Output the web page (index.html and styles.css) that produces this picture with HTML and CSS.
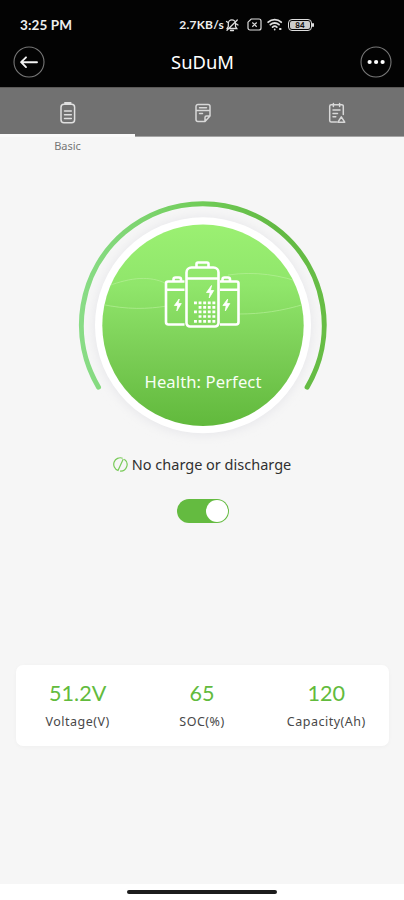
FILE: index.html
```html
<!DOCTYPE html>
<html lang="en">
<head>
<meta charset="utf-8">
<title>SuDuM</title>
<link rel="stylesheet" href="styles.css">
</head>
<body>
<div class="screen">
  <header class="top">
    <div class="status">
      <span class="clock">3:25 PM</span>
      <div class="indicators">
        <span class="speed">2.7KB/s</span>
        <svg class="i-mute" width="14" height="14" viewBox="0 0 14 14" fill="none" stroke="#ddd" stroke-width="1.3" stroke-linecap="round"><path d="M2 10.500 3.300 8.500V5.500a3.500 3.500 0 0 1 7.200 0v3l1.300 2H2M5.500 12.500h3M2 12.300 12.300 2M1.500 3.500l1.500 1M11.500 6l1.500 1"/></svg>
        <svg class="i-sim" width="15" height="13" viewBox="0 0 15 13" fill="none" stroke="#ddd" stroke-width="1.2"><path d="M4.200 1H12a2 2 0 0 1 2 2v7a2 2 0 0 1-2 2H3a2 2 0 0 1-2-2V4.200zM5.300 4.500l4.400 4.200M9.700 4.500 5.300 8.700"/></svg>
        <svg class="i-wifi" width="16" height="13" viewBox="0 0 16 13" fill="none" stroke="#ddd" stroke-width="1.800" stroke-linecap="round"><path d="M1.200 4.200a9.600 9.600 0 0 1 13 0M3.400 6.700a6.300 6.300 0 0 1 8.600 0M5.600 9.100a3.200 3.200 0 0 1 4.200 0"/><path d="M7.700 11.400v.1M12.900 11h.8" stroke-width="1.800"/></svg>
        <span class="batt"><span class="batt-level">84</span></span>
      </div>
    </div>
    <div class="nav">
      <svg width="32" height="32" viewBox="0 0 32 32" fill="none"><circle cx="16" cy="16" r="15" stroke="#777" stroke-width="1.1"/><path d="M24 16.200H8.300M13 11.300l-4.900 4.900 4.900 4.900" stroke="#f4f4f4" stroke-width="1.900" stroke-linecap="round" stroke-linejoin="round"/></svg>
      <h1>SuDuM</h1>
      <svg width="32" height="32" viewBox="0 0 32 32" fill="none"><circle cx="16" cy="16" r="15" stroke="#777" stroke-width="1.1"/><g fill="#fff"><circle cx="9.600" cy="16" r="2.100"/><circle cx="16.100" cy="16" r="2.100"/><circle cx="22.600" cy="16" r="2.100"/></g></svg>
    </div>
  </header>
  <nav class="tabs">
    <div class="tab active">
      <svg width="18" height="24" viewBox="0 0 18 24" fill="none" stroke="#e0e0e0" stroke-width="1.500" stroke-linecap="round"><rect x="2" y="3.200" width="13.600" height="18.600" rx="3"/><path d="M6 1.900h5.600" stroke-width="2"/><path d="M5.500 10h6.800M5.500 13.700h6.800M5.500 17.400h6.800"/></svg>
    </div>
    <div class="tab">
      <svg width="18" height="24" viewBox="0 0 18 24" fill="none" stroke="#d8d8d8" stroke-width="1.500" stroke-linecap="round" stroke-linejoin="round"><path d="M4 3.500h10a2 2 0 0 1 2 2v9.500l-5 5.500H4a2 2 0 0 1-2-2v-13a2 2 0 0 1 2-2zM16 15h-3.500a1.500 1.500 0 0 0-1.500 1.500v4M5.500 6.800h7M2.500 9.600h13M5.500 12.600h3"/></svg>
    </div>
    <div class="tab">
      <svg width="18" height="24" viewBox="0 0 18 24" fill="none" stroke="#d8d8d8" stroke-width="1.500" stroke-linecap="round" stroke-linejoin="round"><path d="M8.500 21H3.200a1.500 1.500 0 0 1-1.500-1.500V5.200a1.500 1.500 0 0 1 1.500-1.500h10.600a1.500 1.500 0 0 1 1.500 1.500v8.300M5.400 2.400v3M11.600 2.400v3M5 9h7M5 12.400h4.500M5 15.800h2.800M13.300 15.800l-3.400 5.400h6.800z"/></svg>
    </div>
  </nav>
  <div class="tab-labels"><span>Basic</span></div>
  <main class="content">
    <section class="dial">
      <svg class="gauge" width="270" height="260" viewBox="70 190 270 260" fill="none">
        <defs>
          <linearGradient id="fill" x1="0" y1="0" x2="0" y2="1"><stop offset="0" stop-color="#9bf072"/><stop offset=".3" stop-color="#90e66b"/><stop offset=".65" stop-color="#7acd55"/><stop offset="1" stop-color="#61b93c"/></linearGradient>
          <linearGradient id="arc" x1="0" y1="0" x2="1" y2="0"><stop offset="0" stop-color="#89dc86"/><stop offset=".5" stop-color="#70cc57"/><stop offset=".8" stop-color="#62b943"/><stop offset="1" stop-color="#67bd45"/></linearGradient>
          <filter id="soft" x="-20%" y="-20%" width="140%" height="140%"><feGaussianBlur stdDeviation="5"/></filter>
          <clipPath id="disc"><circle cx="203" cy="325.300" r="100.700"/></clipPath>
        </defs>
        <circle cx="203" cy="326" r="110" fill="#e9e9ec" filter="url(#soft)"/>
        <circle cx="203" cy="325.300" r="108" fill="#fff"/>
        <circle cx="203" cy="325.300" r="100.700" fill="url(#fill)"/>
        <g clip-path="url(#disc)" stroke="#b9f09b" stroke-opacity=".65" stroke-width="1"><path d="M108 286c24-9 42-10 57-3M228 275c27-4 53 0 77 9M100 304c28 6 48 5 67 2M239 314c22 0 43-3 66-10"/></g>
        <path d="M98.500 387.200A121.400 121.400 0 1 1 307.100 387.200" stroke="url(#arc)" stroke-width="5" stroke-linecap="round"/>
        <g stroke="#fff" stroke-width="2.600" stroke-linejoin="round">
          <path d="M184.500 281.500H168a2 2 0 0 0-2 2V322a2.500 2.500 0 0 0 2.500 2.500h16M166 289.700h18.500M220 281.500h16.500a2 2 0 0 1 2 2V322a2.500 2.500 0 0 1-2.500 2.500h-16M220 289.700h18.500"/>
          <path d="M173.500 281v-1.500a2 2 0 0 1 2-2h3.500a2 2 0 0 1 2 2v1.500M222.500 281v-1.500a2 2 0 0 1 2-2h3.500a2 2 0 0 1 2 2v1.500"/>
          <path d="M196.500 267v-3a1.500 1.500 0 0 1 1.500-1.500h9a1.500 1.500 0 0 1 1.500 1.500v3"/>
          <path d="M186.500 278.500v-6a5 5 0 0 1 5-5h22a5 5 0 0 1 5 5v6zM186.500 278.500V323a3.500 3.500 0 0 0 3.500 3.500h25a3.500 3.500 0 0 0 3.500-3.500v-44.500"/>
        </g>
        <path d="M194 302.800h21.500M198.600 307.300h17M194 311.800h21.500M198.600 316.500h17M194 321.300h21.500" stroke="#fff" stroke-width="2.700" stroke-dasharray="2.900 1.700"/>
        <g fill="#fff" stroke="#fff" stroke-width=".8" stroke-linejoin="round"><path d="M211.500 285.500l-5 7h3.600l-.9 5.500 4.500-7.500h-3.300zM179.200 299l-4.800 6.500h3.300l-.9 5.500 4.500-7.500h-3.100zM227.700 299l-4.800 6.500h3.300l-.9 5.500 4.500-7.500h-3.100z"/></g>
      </svg>
      <span class="health">Health: Perfect</span>
    </section>
    <div class="state">
      <svg width="15" height="15" viewBox="0 0 15 15" fill="none" stroke="#78ca58" stroke-width="1.200"><path d="M9.600 1.200A6.500 6.500 0 1 0 5 13.500L10.300 2M11.300 2.200A6.500 6.500 0 0 1 7 14"/></svg>
      <span>No charge or discharge</span>
    </div>
    <div class="switch"><span class="knob"></span></div>
    <section class="stats">
      <div class="stat"><b>51.2V</b><span>Voltage(V)</span></div>
      <div class="stat"><b>65</b><span>SOC(%)</span></div>
      <div class="stat"><b>120</b><span>Capacity(Ah)</span></div>
    </section>
  </main>
  <footer class="home"><span></span></footer>
</div>
</body>
</html>
```
FILE: styles.css
```css
* { box-sizing: border-box; }
body { margin: 0; font-family: "Noto Sans", sans-serif; background: #f6f6f6; }
svg { display: block; flex: none; }
.screen { width: 404px; height: 900px; display: flex; flex-direction: column; background: #f6f6f6; overflow: hidden; }
.top { height: 88px; background: #030303; border-bottom: 1px solid #5b5958; }
.status { height: 46px; padding: 3px 92px 0 20px; display: flex; align-items: center; justify-content: space-between; color: #eee; font-family: Lato, sans-serif; font-weight: 700; white-space: nowrap; }
.clock { font-size: 13.5px; letter-spacing: .1px; }
.indicators { display: flex; align-items: center; }
.speed { font-size: 12px; letter-spacing: .2px; }
.i-mute { margin-left: 1px; }
.i-sim { margin-left: 8px; }
.i-wifi { margin-left: 5px; }
.batt { position: relative; width: 24px; height: 12px; margin-left: 5px; padding: 1px; border: 1.5px solid #ddd; border-radius: 4px; display: flex; }
.batt::after { content: ""; position: absolute; left: 23px; top: 3px; width: 2px; height: 4px; background: #ddd; border-radius: 1px; }
.batt-level { flex: 1; background: #ccc; border-radius: 2px; color: #111; font-size: 8px; line-height: 8px; text-align: center; font-weight: 900; }
.nav { height: 32px; padding: 0 12px 0 13px; display: flex; align-items: center; justify-content: space-between; }
h1 { margin: 0; font-size: 18.4px; line-height: 32px; font-weight: 400; color: #fff; }
.tabs { height: 49px; background: #717171; display: flex; }
.tab { flex: 1; display: flex; justify-content: center; padding: 13px 0 0 1px; border-bottom: 1px solid #a5a5a5; }
.tab.active { border-bottom: 3px solid #fafafa; }
.tab-labels { width: 135px; height: 17px; text-align: center; font-size: 11px; line-height: 17px; color: #777; }
.content { flex: 1; display: flex; flex-direction: column; align-items: center; }
.dial { position: relative; width: 270px; height: 260px; margin: 36px 0 0 6px; }
.health { position: absolute; left: 0; right: 4px; top: 180px; text-align: center; font-size: 16.6px; letter-spacing: .1px; line-height: 24px; color: #f8fff4; }
.state { height: 24px; margin-top: 2px; display: flex; align-items: center; gap: 4px; color: #303030; font-size: 14.5px; white-space: nowrap; }
.switch { width: 52px; height: 24px; margin: 23px 0 0 2px; padding: 1px; border-radius: 12px; background: #64bb40; display: flex; justify-content: flex-end; }
.knob { width: 22px; height: 22px; border-radius: 50%; background: #fff; }
.stats { width: 373px; height: 81px; margin-top: 142px; border-radius: 7px; background: #fff; box-shadow: 0 1px 4px rgba(0,0,0,.03); display: grid; grid-template-columns: repeat(3, 1fr); }
.stat { display: flex; flex-direction: column; align-items: center; padding-top: 13px; }
.stat b { font: 400 21.6px/30px Lato, sans-serif; color: #62bb3d; }
.stat span { margin-top: 5px; font-size: 12.5px; letter-spacing: .5px; line-height: 17px; color: #484848; }
.home { height: 16px; background: #fff; display: flex; justify-content: center; padding-top: 6px; }
.home span { width: 150px; height: 4px; border-radius: 2px; background: #1c1c1c; }
```
